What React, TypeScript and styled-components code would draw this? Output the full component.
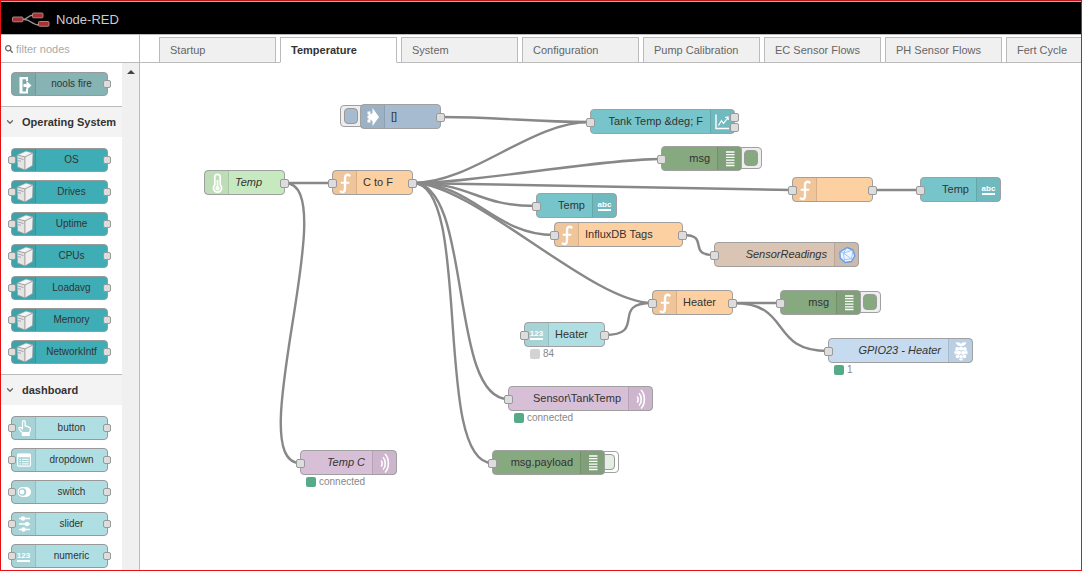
import React from "react";
import styled, { createGlobalStyle, css } from "styled-components";
import { FaSearch } from "react-icons/fa";
import { ChevronDown } from "lucide-react";

const GlobalStyle = createGlobalStyle`
  *, *::before, *::after { box-sizing: border-box; }
  body {
    margin: 0;
    background: #fff;
    color: #333;
    font-family: "Liberation Sans", Arial, Helvetica, sans-serif;
    font-size: 11px;
    line-height: 14px;
  }
  button, input { font: inherit; color: inherit; }
`;

/* ---------- icons (24 x 24 grid) ---------- */

type IconName =
  | "exit" | "server" | "hand" | "list" | "toggle" | "sliders" | "digits"
  | "thermometer" | "func" | "inject" | "chart" | "debug" | "abc" | "influx" | "pi" | "waves";

const Glyph = styled.svg`
  display: block;
  width: 24px;
  height: 24px;
  flex: none;
`;

const WordIcon = styled.span`
  border-bottom: 2px solid #fff;
  color: #fff;
  font-size: 8px;
  line-height: 9px;
  font-weight: bold;
`;

const Icon = ({ name }: { name: IconName }) => {
  switch (name) {
    case "abc":
      return <WordIcon>abc</WordIcon>;
    case "digits":
      return <WordIcon>123</WordIcon>;
    case "pi":
      return (
        <Glyph viewBox="0 0 24 24" fill="#fff">
          <path d="M12 7.200C9.500 7.400 7.300 6 6.800 3.600 9 2.900 11.300 3.600 12 5.200c.7-1.600 3-2.300 5.200-1.600C16.700 6 14.500 7.400 12 7.200z" />
          <circle cx="12" cy="9.600" r="2.100" />
          <circle cx="8.200" cy="10" r="1.900" />
          <circle cx="15.800" cy="10" r="1.900" />
          <ellipse cx="6.700" cy="13.600" rx="1.300" ry="2" />
          <ellipse cx="17.300" cy="13.600" rx="1.300" ry="2" />
          <circle cx="9.900" cy="13.800" r="2.100" />
          <circle cx="14.100" cy="13.800" r="2.100" />
          <circle cx="8.500" cy="17.500" r="1.800" />
          <circle cx="15.500" cy="17.500" r="1.800" />
          <ellipse cx="12" cy="17.600" rx="1.800" ry="1.600" />
          <ellipse cx="12" cy="20.400" rx="1.900" ry="1.100" />
        </Glyph>
      );
    case "list":
      return (
        <Glyph viewBox="0 0 24 24">
          <rect x="5.600" y="6.100" width="12.800" height="12" rx="1" fill="none" stroke="#fff" strokeWidth="1.100" />
          <path d="M5.500 5.800h13v3.400h-13z" fill="#fff" />
          <path d="M7.500 11.300h1.500M7.500 13.600h1.500M7.500 15.900h1.500M10 11.300h6.700M10 13.600h6.700M10 15.900h6.700" stroke="#fff" strokeWidth="1" />
        </Glyph>
      );
    case "exit":
      return (
        <Glyph viewBox="0 0 24 24" fill="#fff">
          <path d="M7.500 5h8.500v4h-2V7.200h-3.500v12.300H14V17h2v4.500H7.500z" />
          <path d="M11.500 12h3V9l5 4.500-5 4.500v-3h-3z" />
        </Glyph>
      );
    case "server":
      return (
        <Glyph viewBox="0 0 24 24" strokeLinejoin="round">
          <path d="M5 7 14 3l7 2-8 4z" fill="#f4f4f4" stroke="#999" strokeWidth=".7" />
          <path d="M5 7l8 2v13l-7.500-3z" fill="#e4e4e4" stroke="#999" strokeWidth=".7" />
          <path d="M13 9l8-4-.5 12.500L13 22z" fill="#efefef" stroke="#999" strokeWidth=".7" />
          <path d="M6 10l5.500 1.500M6 12.500l3 .8" fill="none" stroke="#999" strokeWidth=".8" />
        </Glyph>
      );
    case "hand":
      return (
        <Glyph viewBox="0 0 24 24">
          <path
            d="M10.200 16.500 7 12.800c-.5-1.200 1-2 2-1l1.500 1.200V5.800c0-1.700 2.600-1.700 2.600 0v4.400c.7-.6 1.700-.3 2 .5.800-.3 1.500 0 1.700.7 1-.1 1.600.4 1.600 1.300 0 1.600-.7 2.500-1 3.800z"
            fill="none"
            stroke="#fff"
            strokeWidth="1.200"
            strokeLinejoin="round"
          />
          <path d="M9.800 16.500h8V20h-8z" fill="#fff" />
        </Glyph>
      );
    case "toggle":
      return (
        <Glyph viewBox="0 0 24 24">
          <rect x="5.500" y="7" width="13.500" height="10" rx="5" fill="#fff" />
          <circle cx="10.500" cy="12" r="3.800" fill="#a4cdd1" />
          <circle cx="10" cy="12" r="2.400" fill="#fff" />
        </Glyph>
      );
    case "sliders":
      return (
        <Glyph viewBox="0 0 24 24" fill="#fff">
          <path d="M7 6.500h11M7 12h11M7 17.500h11" stroke="#fff" strokeWidth="1.400" />
          <circle cx="11" cy="6.500" r="2.200" />
          <circle cx="15" cy="12" r="2.200" />
          <circle cx="11.500" cy="17.500" r="2.200" />
        </Glyph>
      );
    case "thermometer":
      return (
        <Glyph viewBox="0 0 24 24">
          <path
            d="M9.800 14V6a2.700 2.700 0 0 1 5.400 0v8a4.100 4.100 0 1 1-5.400 0z"
            fill="none"
            stroke="#fff"
            strokeWidth="1.700"
          />
          <path d="M12.500 9v8" stroke="#fff" strokeWidth="1.800" />
          <circle cx="12.500" cy="17.200" r="2.200" fill="#fff" />
        </Glyph>
      );
    case "func":
      return (
        <Glyph viewBox="0 0 24 24" fill="none" stroke="#fff" strokeLinecap="round">
          <path d="M16.500 4.400c-2.600-1.400-4.500-.3-4.500 2.600v10.300c0 3.400-1.700 4.600-4.300 3.200" strokeWidth="2.400" />
          <path d="M8.500 11.800h7" strokeWidth="2" />
        </Glyph>
      );
    case "inject":
      return (
        <Glyph viewBox="0 0 24 24" fill="#fff">
          <path d="M11.500 3 18 12l-6.500 9v-5.200h-1V8.200h1z" />
          <path d="M6.500 6.500h3v2.800h1.500v5.400H9.500v2.800h-3v-2.800h1v-1.500h-1v-2.400h1V9.300h-1z" />
        </Glyph>
      );
    case "chart":
      return (
        <Glyph viewBox="0 0 24 24" fill="none" stroke="#fff">
          <path d="M5 4.500V18.500H18" strokeWidth="1.400" />
          <path d="M7.500 15.500l3-5 2 3 4.500-6M14 7.500l3-.5.3 3" strokeWidth="1.200" />
        </Glyph>
      );
    case "debug":
      return (
        <Glyph viewBox="0 0 24 24" stroke="#fff" strokeWidth="1.300">
          <path d="M8 5h8.500M8 7.700h8.500M8 10.400h8.500M8 13.100h8.500M8 15.800h8.500M8 18.500h8.500" />
        </Glyph>
      );
    case "influx":
      return (
        <Glyph viewBox="0 0 24 24" strokeLinejoin="round">
          <path
            d="M12 4.500l6 2.500 1.800 6-3.300 5.500-6.500 1L5.200 15l-.3-6z"
            fill="#eef5ff"
            stroke="#5e9cec"
            strokeWidth="1.400"
          />
          <path
            d="M12 4.500 8.500 10l8 6L18 7l-9.500 3 .8 6.500 7.200-.5M4.900 9l3.600 1M9.300 16.500l.7 3"
            fill="none"
            stroke="#8db9f2"
            strokeWidth=".8"
          />
        </Glyph>
      );
    case "waves":
      return (
        <Glyph viewBox="0 0 24 24" fill="none" stroke="#fff">
          <path d="M8 9.500c1.600 1.500 1.600 4.500 0 6" strokeWidth="1.600" />
          <path d="M10 6.300c3 3 3 9.200 0 12.200" strokeWidth="1.600" />
          <path d="M12 3c4.500 4.500 4.500 14 0 18.500" strokeWidth="1.600" />
        </Glyph>
      );
  }
};

/* ---------- shell ---------- */

const Shell = styled.div`
  display: flex;
  flex-direction: column;
  height: 100vh;
  overflow: hidden;
  border: 1px solid #e60f12;
  border-top-color: #b3191d;
`;

const Header = styled.header`
  display: flex;
  align-items: center;
  gap: 6px;
  height: 34px;
  flex: none;
  padding: 3px 10px 0 11px;
  background: #000;
  border-top: 1px solid #e3989a;
  border-bottom: 1px solid #bbb;
`;

const Logo = styled.svg`
  width: 38px;
  height: 16px;
`;

const Title = styled.h1`
  margin: 0;
  color: #ccc;
  font-size: 13px;
  line-height: 16px;
  font-weight: normal;
`;

const Main = styled.main`
  display: flex;
  flex: 1;
  min-height: 0;
`;

/* ---------- palette ---------- */

const Palette = styled.aside`
  display: flex;
  flex-direction: column;
  width: 139px;
  flex: none;
  border-right: 1px solid #bbb;
`;

const Search = styled.label`
  display: flex;
  align-items: center;
  gap: 3px;
  height: 28px;
  flex: none;
  padding: 0 4px;
  border-bottom: 1px solid #bbb;
  color: #666;
`;

const SearchInput = styled.input`
  flex: 1;
  min-width: 0;
  padding: 0;
  border: 0;
  outline: 0;
  background: none;
  &::placeholder { color: #aaa; opacity: 1; }
`;

const PaletteBody = styled.div`
  display: flex;
  flex: 1;
  min-height: 0;
`;

const Categories = styled.div`
  flex: 1;
  overflow: hidden;
`;

const ScrollTrack = styled.div`
  width: 17px;
  flex: none;
  background: #f0f0f0;
`;

const ScrollUp = styled.button`
  display: flex;
  align-items: center;
  justify-content: center;
  width: 17px;
  height: 18px;
  padding: 0;
  border: 0;
  background: none;
`;

const CategoryHeader = styled.button`
  display: flex;
  align-items: center;
  gap: 7px;
  width: 100%;
  height: 31px;
  padding: 0 4px;
  border: 0;
  border-top: 1px solid #bbb;
  background: #f3f3f3;
  color: #333;
  font-weight: bold;
  white-space: nowrap;
  svg { color: #666; flex: none; }
`;

const CategoryList = styled.div<{ $top: number }>`
  display: flex;
  flex-direction: column;
  gap: 8px;
  padding: ${(p) => p.$top}px 14px 10px 10px;
`;

/* ---------- nodes ---------- */

const NodeBody = styled.div<{ $color: string }>`
  position: relative;
  display: flex;
  border: 1px solid #999;
  border-radius: 4px;
  background: ${(p) => p.$color};
`;

const PaletteNode = styled(NodeBody)`
  height: 24px;
`;

const FlowNodeBody = styled(NodeBody)`
  height: 25px;
  border-color: #a0a0a0;
`;

const IconCell = styled.span<{ $side: "left" | "right" }>`
  display: flex;
  align-items: center;
  justify-content: center;
  width: 24px;
  flex: none;
  background: rgba(0, 0, 0, 0.05);
  ${(p) =>
    p.$side === "left"
      ? css`border-right: 1px solid rgba(0, 0, 0, 0.1);`
      : css`border-left: 1px solid rgba(0, 0, 0, 0.1);`}
`;

const PaletteLabel = styled.span`
  flex: 1;
  color: #333;
  font-size: 10px;
  line-height: 22px;
  text-align: center;
  white-space: nowrap;
`;

const FlowLabel = styled.span<{ $italic?: boolean; $align: "left" | "right" }>`
  flex: 1;
  padding: 0 7px 0 6px;
  color: #333;
  line-height: 23px;
  white-space: nowrap;
  text-align: ${(p) => p.$align};
  font-style: ${(p) => (p.$italic ? "italic" : "normal")};
`;

const Port = styled.i<{ $side: "in" | "out"; $size: number; $shift?: number }>`
  position: absolute;
  top: calc(50% - ${(p) => Math.floor(p.$size / 2) - (p.$shift ?? 0)}px);
  ${(p) => (p.$side === "in" ? "left" : "right")}: -${(p) => Math.ceil(p.$size / 2)}px;
  width: ${(p) => p.$size}px;
  height: ${(p) => p.$size}px;
  border: 1px solid #999;
  border-radius: 2px;
  background: #ddd;
`;

const FlowNode = styled.div<{ $x: number; $y: number; $w: number }>`
  position: absolute;
  left: ${(p) => p.$x}px;
  top: ${(p) => p.$y}px;
  width: ${(p) => p.$w}px;
`;

const NodeButton = styled.button<{ $side: "left" | "right"; $off?: boolean }>`
  position: absolute;
  top: 1px;
  ${(p) => p.$side}: -${(p) => (p.$off ? 14 : 20)}px;
  display: flex;
  align-items: center;
  justify-content: ${(p) => (p.$side === "left" ? "flex-start" : "flex-end")};
  width: 27px;
  height: 22px;
  padding: 0 3px;
  border: 1px solid #a0a0a0;
  border-radius: 4px;
  background: ${(p) => (p.$off ? "#fff" : "#eee")};
`;

const ButtonFace = styled.span<{ $color: string }>`
  width: 14px;
  height: 16px;
  border: 1px solid #999;
  border-radius: 4px;
  background: ${(p) => p.$color};
`;

const Status = styled.div`
  display: flex;
  align-items: center;
  gap: 3px;
  padding: 1px 6px;
  color: #888;
  font-size: 10px;
  line-height: 12px;
`;

const StatusDot = styled.i<{ $color: string }>`
  width: 10px;
  height: 10px;
  border-radius: 2px;
  background: ${(p) => p.$color};
`;

/* ---------- workspace ---------- */

const Workspace = styled.section`
  display: flex;
  flex-direction: column;
  flex: 1;
  min-width: 0;
`;

const Tabs = styled.nav`
  display: flex;
  align-items: flex-end;
  gap: 4px;
  height: 28px;
  flex: none;
  padding-left: 19px;
  overflow: hidden;
  box-shadow: inset 0 -1px #bbb;
`;

const Tab = styled.button<{ $active: boolean }>`
  width: 117px;
  height: 26px;
  flex: none;
  padding: 0 10px;
  border: 1px solid #bbb;
  border-bottom-color: ${(p) => (p.$active ? "#fff" : "#bbb")};
  background: ${(p) => (p.$active ? "#fff" : "#f0f0f0")};
  color: ${(p) => (p.$active ? "#333" : "#666")};
  font-weight: ${(p) => (p.$active ? "bold" : "normal")};
  text-align: left;
  white-space: nowrap;
`;

const Canvas = styled.div`
  position: relative;
  flex: 1;
  overflow: hidden;
  background: #fff;
`;

const Wires = styled.svg`
  position: absolute;
  inset: 0;
  width: 100%;
  height: 100%;
`;

/* ---------- data ---------- */

const tabs = [
  "Startup", "Temperature", "System", "Configuration",
  "Pump Calibration", "EC Sensor Flows", "PH Sensor Flows", "Fert Cycle",
];

const TEAL = "#3fadb5";
const PALE = "#b0dfe3";
const CYAN = "#77c5ca";
const FUNC = "#fdd0a2";
const DEBUG = "#87a980";
const MQTT = "#d8bfd8";

const systemNodes = ["OS", "Drives", "Uptime", "CPUs", "Loadavg", "Memory", "NetworkIntf"];
const dashboardNodes: [string, IconName][] = [
  ["button", "hand"], ["dropdown", "list"], ["switch", "toggle"],
  ["slider", "sliders"], ["numeric", "digits"],
];

interface FlowItem {
  x: number;
  y: number;
  w: number;
  color: string;
  icon: IconName;
  label: string;
  side?: "left" | "right";
  italic?: boolean;
  input?: boolean;
  outputs?: number;
  button?: "on" | "off";
  status?: [string, string];
}

const flow: Record<string, FlowItem> = {
  inject: { x: 220, y: 41, w: 81, color: "#a6bbcf", icon: "inject", label: "[]", outputs: 1, button: "on" },
  temp: { x: 64, y: 107, w: 81, color: "#c7e9c0", icon: "thermometer", label: "Temp", italic: true, outputs: 1 },
  cToF: { x: 192, y: 107, w: 81, color: FUNC, icon: "func", label: "C to F", input: true, outputs: 1 },
  chart: { x: 450, y: 46, w: 145, color: CYAN, icon: "chart", label: "Tank Temp &deg; F", side: "right", input: true, outputs: 2 },
  msgTop: { x: 521, y: 83, w: 81, color: DEBUG, icon: "debug", label: "msg", side: "right", input: true, button: "on" },
  tempText: { x: 396, y: 130, w: 81, color: CYAN, icon: "abc", label: "Temp", side: "right", input: true },
  tags: { x: 414, y: 159, w: 129, color: FUNC, icon: "func", label: "InfluxDB Tags", input: true, outputs: 1 },
  readings: { x: 574, y: 179, w: 145, color: "#dac4b4", icon: "influx", label: "SensorReadings", side: "right", italic: true, input: true },
  blank: { x: 652, y: 114, w: 81, color: FUNC, icon: "func", label: "", input: true, outputs: 1 },
  tempRight: { x: 780, y: 114, w: 81, color: CYAN, icon: "abc", label: "Temp", side: "right", input: true },
  heaterFn: { x: 512, y: 227, w: 81, color: FUNC, icon: "func", label: "Heater", input: true, outputs: 1 },
  heaterNum: { x: 384, y: 259, w: 81, color: PALE, icon: "digits", label: "Heater", input: true, outputs: 1, status: ["#d3d3d3", "84"] },
  msgHeater: { x: 640, y: 227, w: 81, color: DEBUG, icon: "debug", label: "msg", side: "right", input: true, button: "on" },
  gpio: { x: 688, y: 275, w: 145, color: "#c6dbef", icon: "pi", label: "GPIO23 - Heater", side: "right", italic: true, input: true, status: ["#5a8", "1"] },
  tank: { x: 368, y: 323, w: 145, color: MQTT, icon: "waves", label: "Sensor\\TankTemp", side: "right", input: true, status: ["#5a8", "connected"] },
  payload: { x: 352, y: 387, w: 113, color: DEBUG, icon: "debug", label: "msg.payload", side: "right", input: true, button: "off" },
  tempC: { x: 160, y: 387, w: 97, color: MQTT, icon: "waves", label: "Temp C", side: "right", italic: true, input: true, status: ["#5a8", "connected"] },
};

const wires: [string, string][] = [
  ["inject", "chart"], ["temp", "cToF"], ["temp", "tempC"],
  ["cToF", "chart"], ["cToF", "msgTop"], ["cToF", "blank"], ["cToF", "tempText"],
  ["cToF", "tags"], ["cToF", "heaterFn"], ["cToF", "tank"], ["cToF", "payload"],
  ["blank", "tempRight"], ["tags", "readings"], ["heaterNum", "heaterFn"],
  ["heaterFn", "msgHeater"], ["heaterFn", "gpio"],
];

const PORT_Y = 13;

// Horizontal cubic between two ports; short wires get a proportionally tighter bend.
const wirePath = (from: FlowItem, to: FlowItem) => {
  const x0 = from.x + from.w;
  const y0 = from.y + PORT_Y;
  const x1 = to.x;
  const y1 = to.y + PORT_Y;
  const bend = Math.min(60, 0.75 * Math.hypot(x1 - x0, y1 - y0));
  return `M${x0} ${y0}C${x0 + bend} ${y0} ${x1 - bend} ${y1} ${x1} ${y1}`;
};

/* ---------- components ---------- */

const PaletteItem = ({ label, icon, color, input = true }: {
  label: string; icon: IconName; color: string; input?: boolean;
}) => (
  <PaletteNode $color={color}>
    <IconCell $side="left"><Icon name={icon} /></IconCell>
    <PaletteLabel>{label}</PaletteLabel>
    {input && <Port $side="in" $size={8} />}
    <Port $side="out" $size={8} />
  </PaletteNode>
);

const Category = ({ title, children }: { title: string; children: React.ReactNode }) => (
  <section>
    <CategoryHeader type="button" aria-expanded="true">
      <ChevronDown size={10} strokeWidth={3} />
      {title}
    </CategoryHeader>
    <CategoryList $top={11}>{children}</CategoryList>
  </section>
);

const FlowNodeView = ({ item }: { item: FlowItem }) => {
  const side = item.side ?? "left";
  const cell = <IconCell $side={side}><Icon name={item.icon} /></IconCell>;
  return (
    <FlowNode $x={item.x} $y={item.y} $w={item.w}>
      {item.button && (
        <NodeButton type="button" $side={side} $off={item.button === "off"} aria-label={`Toggle ${item.label}`}>
          <ButtonFace $color={item.button === "off" ? "#e4eee2" : item.color} />
        </NodeButton>
      )}
      <FlowNodeBody $color={item.color}>
        {side === "left" && cell}
        <FlowLabel $italic={item.italic} $align={side}>{item.label}</FlowLabel>
        {side === "right" && cell}
        {item.input && <Port $side="in" $size={9} />}
        {item.outputs === 1 && <Port $side="out" $size={9} />}
        {item.outputs === 2 && (
          <>
            <Port $side="out" $size={9} $shift={-5} />
            <Port $side="out" $size={9} $shift={5} />
          </>
        )}
      </FlowNodeBody>
      {item.status && (
        <Status>
          <StatusDot $color={item.status[0]} />
          {item.status[1]}
        </Status>
      )}
    </FlowNode>
  );
};

export default function App() {
  return (
    <>
      <GlobalStyle />
      <Shell>
        <Header>
          <Logo viewBox="0 0 38 16" aria-hidden="true">
            <path
              d="M10 7.500c6 0 5-4.500 12-4.500M12 7.500c8 0 6 5.500 16 5.500"
              fill="none"
              stroke="#999"
              strokeWidth="1.300"
            />
            <g fill="#a63234" stroke="#bd8a8a" strokeWidth=".9">
              <rect x=".5" y="5" width="10.500" height="4.800" rx="1" />
              <rect x="20.500" y="1" width="10.500" height="4.800" rx="1" />
              <rect x="26.500" y="9.500" width="10.500" height="4.800" rx="1" />
            </g>
          </Logo>
          <Title>Node-RED</Title>
        </Header>
        <Main>
          <Palette>
            <Search>
              <FaSearch size={8} />
              <SearchInput type="text" placeholder="filter nodes" aria-label="filter nodes" />
            </Search>
            <PaletteBody>
              <Categories>
                <CategoryList $top={9}>
                  <PaletteItem label="nools fire" icon="exit" color="#86b4b4" input={false} />
                </CategoryList>
                <Category title="Operating System">
                  {systemNodes.map((n) => (
                    <PaletteItem key={n} label={n} icon="server" color={TEAL} />
                  ))}
                </Category>
                <Category title="dashboard">
                  {dashboardNodes.map(([n, icon]) => (
                    <PaletteItem key={n} label={n} icon={icon} color={PALE} />
                  ))}
                </Category>
              </Categories>
              <ScrollTrack>
                <ScrollUp type="button" aria-label="Scroll up">
                  <svg width="8" height="4" viewBox="0 0 8 4"><path d="M0 4 4 0l4 4z" fill="#444" /></svg>
                </ScrollUp>
              </ScrollTrack>
            </PaletteBody>
          </Palette>
          <Workspace>
            <Tabs>
              {tabs.map((t) => (
                <Tab key={t} type="button" $active={t === "Temperature"}>{t}</Tab>
              ))}
            </Tabs>
            <Canvas>
              <Wires fill="none" stroke="#888" strokeWidth="2.400" aria-hidden="true">
                {wires.map(([a, b]) => (
                  <path key={`${a}-${b}`} d={wirePath(flow[a], flow[b])} />
                ))}
              </Wires>
              {Object.entries(flow).map(([id, item]) => (
                <FlowNodeView key={id} item={item} />
              ))}
            </Canvas>
          </Workspace>
        </Main>
      </Shell>
    </>
  );
}
